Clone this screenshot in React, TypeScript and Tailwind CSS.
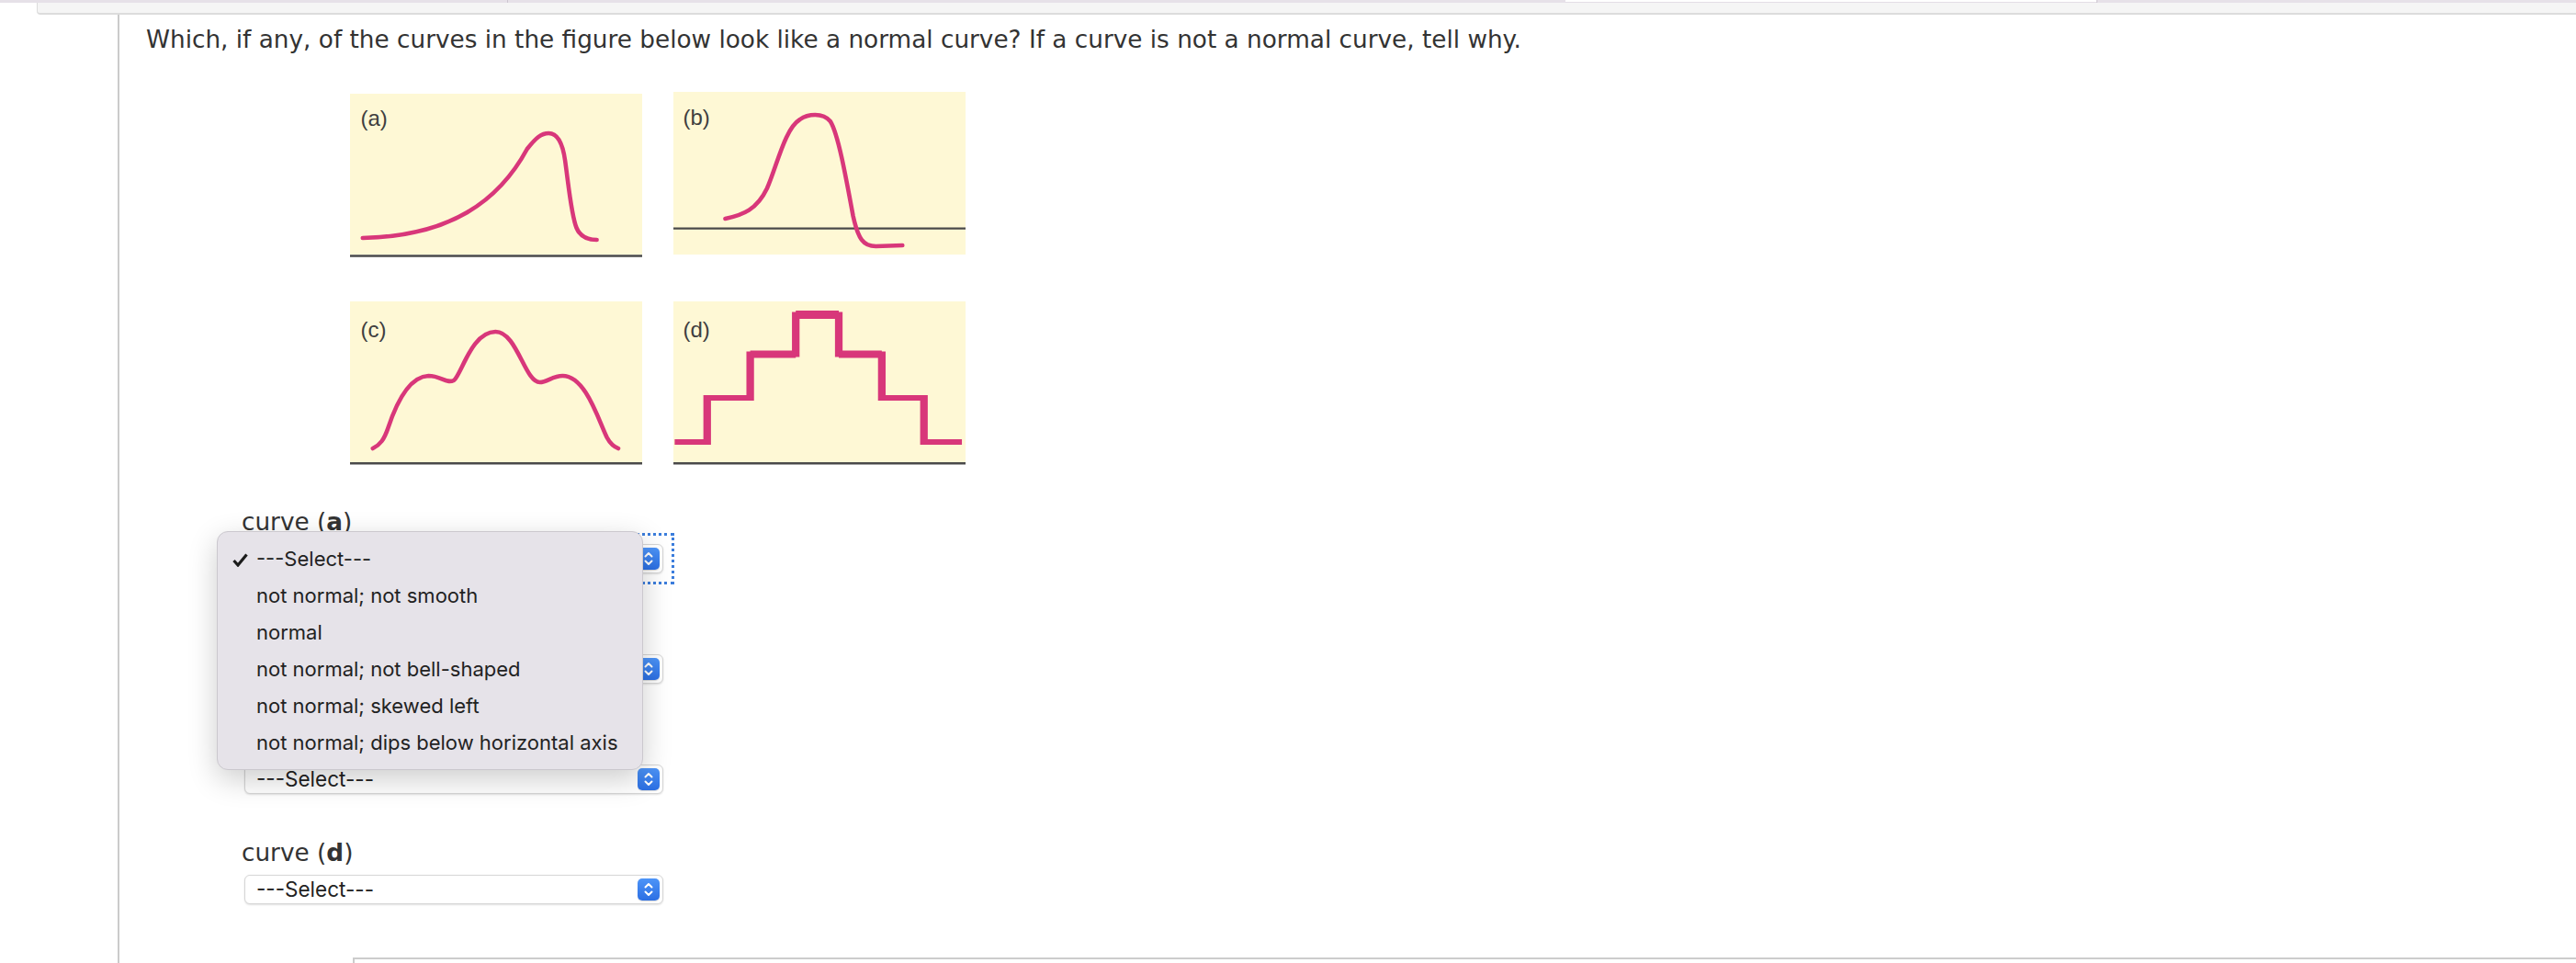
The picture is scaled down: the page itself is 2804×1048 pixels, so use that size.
import React from "react";

const PINK = "#d8377a";
const AXIS = "#4a4a4a";
const PAPER = "#fef8d5";
// the curves were traced on a narrower grid, stretch them to the panel width
const SX = "scale(1.3774 1)";

function PanelLabel({ x, y, text }: { x: number; y: number; text: string }) {
  return (
    <text x={x} y={y} fontFamily="'Liberation Sans', Arial, sans-serif" fontSize="24" fill="#3f3f3f">
      {text}
    </text>
  );
}

function CurveA() {
  return (
    <svg width="318" height="180" viewBox="0 0 318 180">
      <rect x="0" y="2" width="318" height="175" fill={PAPER} />
      <line x1="0" y1="178.5" x2="318" y2="178.5" stroke={AXIS} strokeWidth="2.5" />
      <PanelLabel x={11.5} y={37} text="(a)" />
      <g transform={SX}>
        <path
          d="M10,159 C80,157 118,118 140,62 C147,50 151,45 157,45 C164,45 168,55 170,75 C173,105 175,135 179,148 C182,158 188,161 195,161"
          fill="none"
          stroke={PINK}
          strokeWidth="4.6"
          strokeLinecap="round"
          vectorEffect="non-scaling-stroke"
        />
      </g>
    </svg>
  );
}

function CurveB() {
  return (
    <svg width="318" height="180" viewBox="0 0 318 180">
      <rect x="0" y="0" width="318" height="177" fill={PAPER} />
      <line x1="0" y1="148.7" x2="318" y2="148.7" stroke={AXIS} strokeWidth="2.3" />
      <PanelLabel x={10.5} y={36} text="(b)" />
      <g transform={SX}>
        <path
          d="M41,138 C55,134 66,128 74,105 C82,80 88,40 100,30 C106,24 118,22 124,32 C130,45 136,90 142,135 C146,160 150,168 160,168 L181,167"
          fill="none"
          stroke={PINK}
          strokeWidth="4.6"
          strokeLinecap="round"
          vectorEffect="non-scaling-stroke"
        />
      </g>
    </svg>
  );
}

function CurveC() {
  return (
    <svg width="318" height="180" viewBox="0 0 318 180">
      <rect x="0" y="2" width="318" height="175" fill={PAPER} />
      <line x1="0" y1="178.3" x2="318" y2="178.3" stroke={AXIS} strokeWidth="2.5" />
      <PanelLabel x={11.5} y={41} text="(c)" />
      <g transform={SX}>
        <path
          d="M18,162 C24,158 27,152 30,140 C36,115 46,84 62,83 C72,83 76,92 82,88 C88,82 96,35 115,35 C132,35 138,90 150,90 C156,90 160,83 168,83 C186,83 196,130 203,150 C206,158 209,160 212,162"
          fill="none"
          stroke={PINK}
          strokeWidth="4.6"
          strokeLinecap="round"
          vectorEffect="non-scaling-stroke"
        />
      </g>
    </svg>
  );
}

function CurveD() {
  return (
    <svg width="318" height="180" viewBox="0 0 318 180">
      <rect x="0" y="2" width="318" height="175" fill={PAPER} />
      <line x1="0" y1="178.3" x2="318" y2="178.3" stroke={AXIS} strokeWidth="2.5" />
      <PanelLabel x={10.5} y={41} text="(d)" />
      <g transform={SX}>
        <polyline
          points="1,155 26.7,155 26.7,107 60.7,107 60.7,59.5 96.7,59.5 96.7,16.5 130.7,16.5 130.7,59.5 164.7,59.5 164.7,107 198,107 198,155 228,155"
          fill="none"
          stroke={PINK}
          strokeWidth="6"
          strokeLinejoin="miter"
        />
        <line x1="96.7" y1="16.5" x2="130.7" y2="16.5" stroke={PINK} strokeWidth="9" />
        <line x1="60.7" y1="59.5" x2="96.7" y2="59.5" stroke={PINK} strokeWidth="8" />
        <line x1="130.7" y1="59.5" x2="164.7" y2="59.5" stroke={PINK} strokeWidth="8" />
      </g>
    </svg>
  );
}

function Stepper() {
  return (
    <div className="w-[24px] h-[24px] rounded-[5px] bg-gradient-to-b from-[#4d94f8] to-[#2c6fe3] flex items-center justify-center shadow-[0_1px_1px_rgba(0,0,0,0.15)]">
      <svg width="24" height="24" viewBox="0 0 24 24">
        <polyline points="8.5,9.5 12,6 15.5,9.5" fill="none" stroke="#fff" strokeWidth="2" strokeLinecap="round" strokeLinejoin="round" />
        <polyline points="8.5,14.5 12,18 15.5,14.5" fill="none" stroke="#fff" strokeWidth="2" strokeLinecap="round" strokeLinejoin="round" />
      </svg>
    </div>
  );
}

function SelectBox() {
  return (
    <div className="w-[456px] h-[32px] ml-[3px] bg-white border border-[#d6d6d6] rounded-[6px] shadow-[0_1px_2px_rgba(0,0,0,0.12)] flex items-center justify-between pl-[12px] pr-[3px] font-['Inter',sans-serif] text-[22.5px] text-[#222]">
      <span>---Select---</span>
      <Stepper />
    </div>
  );
}

function Label({ letter }: { letter: string }) {
  return (
    <div className="text-[26.3px] leading-[30px] text-[#333]">
      curve (<b className="font-bold">{letter}</b>)
    </div>
  );
}

const options = [
  "---Select---",
  "not normal; not smooth",
  "normal",
  "not normal; not bell-shaped",
  "not normal; skewed left",
  "not normal; dips below horizontal axis",
];

function Menu() {
  return (
    <div className="absolute left-[-27px] top-[25px] z-10 w-[464px] py-[9px] bg-[#e6e3e9] border border-[#cbc8ce] rounded-[12px] shadow-[0_10px_32px_rgba(0,0,0,0.2)] font-['Inter',sans-serif] text-[22px] text-[#222]">
      {options.map((o, i) => (
        <div key={o} className="h-[40px] flex items-start pl-[16px]">
          <div className="w-[26px] pt-[14px]">
            {i === 0 && (
              <svg width="17" height="15" viewBox="0 0 17 15">
                <path d="M1.5,8 L6,13 L15.5,1.5" fill="none" stroke="#1c1c1c" strokeWidth="3.2" />
              </svg>
            )}
          </div>
          <span className="leading-[40px]">{o}</span>
        </div>
      ))}
    </div>
  );
}

export default function App() {
  return (
    <div className="w-[2804px] h-[1048px] overflow-hidden bg-white relative font-['DejaVu_Sans',sans-serif]">
      <div className="flex h-[3px]">
        <div className="w-[552px] bg-[#e6e1e8]" />
        <div className="w-[1px] bg-[#cdc6d0]" />
        <div className="w-[1151px] bg-[#e6e1e8]" />
        <div className="w-[578px] bg-white border-b border-[#e3dee6]" />
        <div className="w-[1px] bg-[#cdc6d0]" />
        <div className="flex-1 bg-[#e6e1e8]" />
      </div>
      <div className="ml-[40px] h-[13px] bg-[#f5f5f5] border-b-2 border-l border-[#dcdcdc] rounded-bl-[4px]" />
      <div className="flex h-full">
        <div className="w-[128px] shrink-0" />
        <div className="flex-1 border-l-2 border-[#cbcbcb] pl-[29px] pt-[12px]">
          <p className="text-[26.3px] leading-[30px] text-[#333]">
            Which, if any, of the curves in the figure below look like a normal curve? If a curve is not a normal curve, tell why.
          </p>
          <div className="ml-[222px] mt-[42px] grid grid-cols-[318px_318px] gap-x-[34px] gap-y-[46px] w-max">
            <CurveA />
            <CurveB />
            <CurveC />
            <CurveD />
          </div>
          <div className="ml-[104px] mt-[47px] flex flex-col gap-[49px]">
            <div className="relative">
              <Label letter="a" />
              <div className="relative mt-[9px] w-max">
                <SelectBox />
                <div className="absolute top-[-12px] bottom-[-12px] left-[-9px] right-[-12px] border-[3px] border-dotted border-[#3b7ddc]" />
              </div>
              <Menu />
            </div>
            <div>
              <Label letter="b" />
              <div className="mt-[9px]">
                <SelectBox />
              </div>
            </div>
            <div>
              <Label letter="c" />
              <div className="mt-[9px]">
                <SelectBox />
              </div>
            </div>
            <div>
              <Label letter="d" />
              <div className="mt-[9px]">
                <SelectBox />
              </div>
            </div>
          </div>
          <div className="ml-[225px] mt-[58px] h-[40px] border-l-2 border-t-2 border-[#cccccc]" />
        </div>
      </div>
    </div>
  );
}
